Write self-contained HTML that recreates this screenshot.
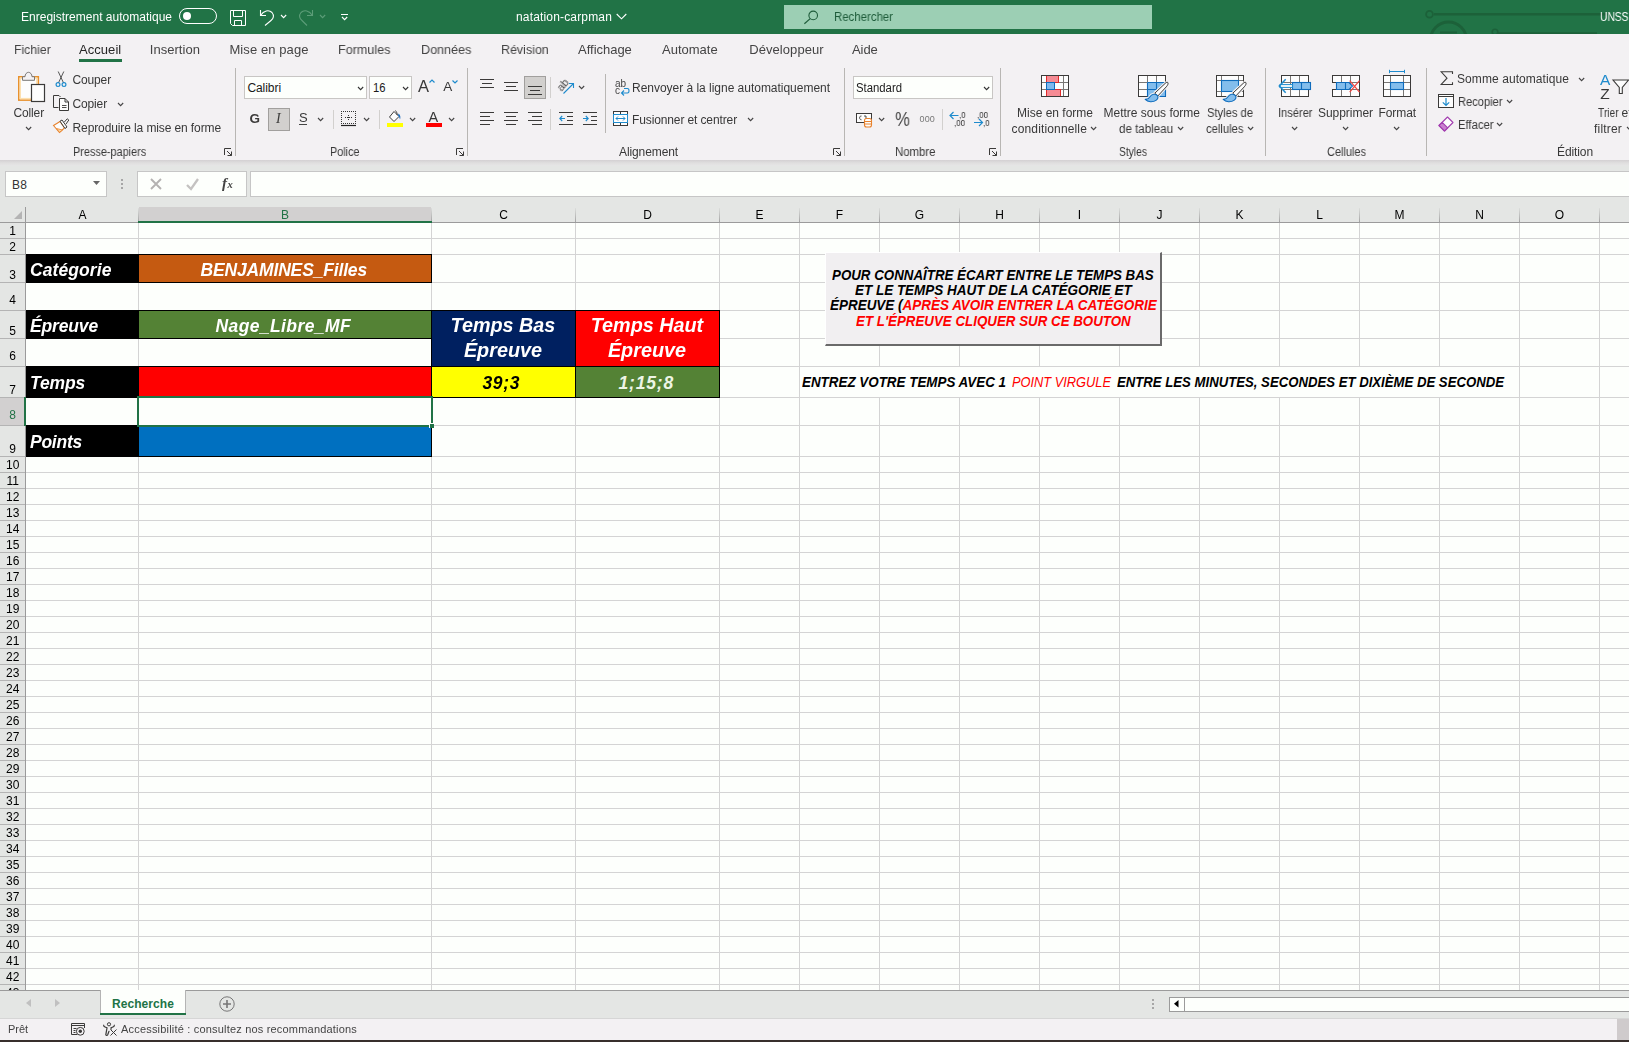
<!DOCTYPE html>
<html lang="fr"><head><meta charset="utf-8"><title>natation-carpman - Excel</title>
<style>
html,body{margin:0;padding:0;}
body{width:1629px;height:1042px;overflow:hidden;position:relative;background:#fdfffc;font-family:"Liberation Sans",sans-serif;}
div,span.t,svg.i{position:absolute;}
span.t{white-space:nowrap;display:block;}
svg.i{overflow:visible;}
</style></head>
<body>
<div style="left:0px;top:0px;width:1629px;height:34px;background:#217346;"></div>
<span class="t" style="left:21px;padding-left:0.00px;top:7.00px;font-size:12px;line-height:20px;color:#fff;letter-spacing:0.010px;will-change:transform;">Enregistrement automatique</span>
<div style="left:179px;top:8px;width:36px;height:14px;border:1px solid #fff;border-radius:8px;"></div>
<div style="left:183px;top:12px;width:8px;height:8px;background:#fff;border-radius:4px;"></div>
<svg class="i" style="left:230px;top:10px;" width="16" height="16" viewBox="0 0 16 16"><path d="M0.5 0.5H15.5V15.5H2.5L0.5 13.5z M3.5 0.5V6.5H12.5V0.5 M4.5 15.5V10.5H11.5V15.5" fill="none" stroke="#fff" stroke-width="1"/></svg>
<svg class="i" style="left:259px;top:9px;" width="16" height="18" viewBox="0 0 16 18"><path d="M1.5 1V6.5H7 M1.8 6.3C4.500 1.500 10 0.500 13 3.500C15.500 6.500 14.500 9.500 12 11.500L6 16.500" fill="none" stroke="#fff" stroke-width="1.1"/></svg>
<svg class="i" style="left:280px;top:14.15px;" width="7.2" height="4.7" viewBox="0 0 7.2 4.7"><path d="M1 1 L3.6 3.7 L6.2 1" fill="none" stroke="#fff" stroke-width="1.1"/></svg>
<svg class="i" style="left:298px;top:9px;" width="16" height="18" viewBox="0 0 16 18"><path d="M14.5 1V6.5H9 M14.2 6.300C11.500 1.500 6 0.500 3 3.500C0.500 6.500 1.500 9.500 4 11.500L9 16.500" fill="none" stroke="#5c9d78" stroke-width="1.1"/></svg>
<svg class="i" style="left:319.1px;top:14.15px;" width="7.2" height="4.7" viewBox="0 0 7.2 4.7"><path d="M1 1 L3.6 3.7 L6.2 1" fill="none" stroke="#5c9d78" stroke-width="1.1"/></svg>
<div style="left:341px;top:14px;width:7px;height:1px;background:#fff;"></div>
<svg class="i" style="left:340.9px;top:15.95px;" width="7.2" height="4.7" viewBox="0 0 7.2 4.7"><path d="M1 1 L3.6 3.7 L6.2 1" fill="none" stroke="#fff" stroke-width="1.1"/></svg>
<svg class="i" style="left:616px;top:13px;" width="12" height="8" viewBox="0 0 12 8"><path d="M0.7 1L5.5 5.800L10.300 1" fill="none" stroke="#fff" stroke-width="1.1"/></svg>
<svg class="i" style="left:1420px;top:0px;clip-path:inset(0 0 0 0);" width="209" height="34" viewBox="0 0 209 34"><g fill="none" stroke="#1c6139" stroke-width="2.600"><path d="M14 14.300H190"/><circle cx="9.500" cy="14.300" r="3.400" stroke-width="1.800"/><circle cx="28.500" cy="40" r="18" stroke-width="3"/><path d="M20 32.500H37" stroke-width="2"/><circle cx="75" cy="32" r="2.800" stroke-width="1.600"/><path d="M78 33.300H177" stroke-width="2.200"/></g></svg>
<span class="t" style="left:516px;padding-left:0.00px;top:7.00px;font-size:12px;line-height:20px;color:#fff;letter-spacing:0.163px;will-change:transform;">natation-carpman</span>
<div style="left:784px;top:5px;width:368px;height:24px;background:#9ccfb4;"></div>
<span class="t" style="left:834.00px;top:7.00px;font-size:12px;line-height:20px;color:#1e5c3a;transform:scaleX(0.9512);transform-origin:0 50%;will-change:transform;">Rechercher</span>
<svg class="i" style="left:803px;top:9px;" width="16" height="16" viewBox="0 0 16 16"><circle cx="10.200" cy="6.400" r="4.300" fill="none" stroke="#1e5c3a" stroke-width="1.1"/><path d="M7.200 9.600L1.400 14.700" stroke="#1e5c3a" stroke-width="1.2"/></svg>
<span class="t" style="left:1599.50px;top:7.00px;font-size:12px;line-height:20px;color:#fff;transform:scaleX(0.8548);transform-origin:0 50%;will-change:transform;">UNSS</span>
<div style="left:0px;top:34px;width:1629px;height:126px;background:#f3f1f3;"></div>
<span class="t" style="left:14.00px;top:40.00px;font-size:13px;line-height:20px;color:#444;transform:scaleX(0.9409);transform-origin:0 50%;will-change:transform;">Fichier</span>
<span class="t" style="left:79px;padding-left:0.00px;top:40.00px;font-size:13px;line-height:20px;color:#262626;letter-spacing:0.056px;will-change:transform;">Accueil</span>
<span class="t" style="left:149px;padding-left:0.80px;top:40.00px;font-size:13px;line-height:20px;color:#444;letter-spacing:0.027px;will-change:transform;">Insertion</span>
<span class="t" style="left:229px;padding-left:0.40px;top:40.00px;font-size:13px;line-height:20px;color:#444;letter-spacing:0.096px;will-change:transform;">Mise en page</span>
<span class="t" style="left:338.10px;top:40.00px;font-size:13px;line-height:20px;color:#444;transform:scaleX(0.9672);transform-origin:0 50%;will-change:transform;">Formules</span>
<span class="t" style="left:421.30px;top:40.00px;font-size:13px;line-height:20px;color:#444;transform:scaleX(0.9685);transform-origin:0 50%;will-change:transform;">Données</span>
<span class="t" style="left:501.20px;top:40.00px;font-size:13px;line-height:20px;color:#444;transform:scaleX(0.9588);transform-origin:0 50%;will-change:transform;">Révision</span>
<span class="t" style="left:578px;padding-left:0.10px;top:40.00px;font-size:13px;line-height:20px;color:#444;letter-spacing:-0.030px;will-change:transform;">Affichage</span>
<span class="t" style="left:662px;padding-left:0.00px;top:40.00px;font-size:13px;line-height:20px;color:#444;letter-spacing:0.007px;will-change:transform;">Automate</span>
<span class="t" style="left:749px;padding-left:0.20px;top:40.00px;font-size:13px;line-height:20px;color:#444;letter-spacing:0.071px;will-change:transform;">Développeur</span>
<span class="t" style="left:851px;padding-left:0.90px;top:40.00px;font-size:13px;line-height:20px;color:#444;letter-spacing:-0.030px;will-change:transform;">Aide</span>
<div style="left:79px;top:59px;width:43px;height:3px;background:#217346;"></div>
<div style="left:0;top:160px;width:1629px;height:6px;background:linear-gradient(#d3d0d2,#e0dfdf 50%,#e6e6e6);"></div>
<div style="left:0px;top:166px;width:1629px;height:41px;background:#e4e6e4;"></div>
<div style="left:5px;top:171px;width:100px;height:24px;background:#fdfffc;border:1px solid #c6c6c6;"></div>
<span class="t" style="left:12.00px;top:175.00px;font-size:12px;line-height:20px;color:#333;letter-spacing:0.161px;">B8</span>
<svg class="i" style="left:93px;top:181px;" width="8" height="5" viewBox="0 0 8 5"><path d="M0 0H7L3.5 4z" fill="#666"/></svg>
<div style="left:121px;top:179px;width:2px;height:2px;background:#a6a6a6;"></div>
<div style="left:121px;top:183px;width:2px;height:2px;background:#a6a6a6;"></div>
<div style="left:121px;top:187px;width:2px;height:2px;background:#a6a6a6;"></div>
<div style="left:137px;top:171px;width:108px;height:24px;background:#fdfffc;border:1px solid #c6c6c6;"></div>
<div style="left:250px;top:171px;width:1390px;height:24px;background:#fdfffc;border:1px solid #c6c6c6;"></div>
<svg class="i" style="left:150px;top:178px;" width="12" height="12" viewBox="0 0 12 12"><path d="M1 1L11 11M11 1L1 11" stroke="#b4b2b1" stroke-width="1.9" fill="none"/></svg>
<svg class="i" style="left:186px;top:178px;" width="13" height="12" viewBox="0 0 13 12"><path d="M1 7L5 11L12 1" stroke="#c4c2c1" stroke-width="2.3" fill="none"/></svg>
<span class="t" style="left:222.00px;top:172.00px;font-size:15px;line-height:22px;color:#444;font-weight:700;font-style:italic;font-family:&quot;Liberation Serif&quot;,serif;">f</span>
<span class="t" style="left:227.50px;top:175.00px;font-size:10.5px;line-height:20px;color:#444;font-weight:700;font-style:italic;font-family:&quot;Liberation Serif&quot;,serif;">x</span>
<svg class="i" style="left:17px;top:71px;" width="30" height="32" viewBox="0 0 30 32"><rect x="1.800" y="5.800" width="19.500" height="23.300" fill="#fdfdfd" stroke="#e8912d" stroke-width="1.600"/>
<rect x="3.300" y="7.300" width="16.500" height="20.300" fill="none" stroke="#fce0b0" stroke-width="1.400"/>
<path d="M5.500 9.300V5.700H8C8 3.200 9.700 1.300 11.500 1.300S15 3.200 15 5.700H17.500V9.300z" fill="#f3f1f3" stroke="#797775" stroke-width="1"/>
<rect x="14.500" y="13.500" width="13" height="17" fill="#fdfdfd" stroke="#3b3a39" stroke-width="1.200"/></svg>
<span class="t" style="left:13px;padding-left:0.50px;top:103.00px;font-size:12px;line-height:20px;color:#383838;letter-spacing:-0.140px;will-change:transform;">Coller</span>
<svg class="i" style="left:24.9px;top:126.15px;" width="7.2" height="4.7" viewBox="0 0 7.2 4.7"><path d="M1 1 L3.6 3.7 L6.2 1" fill="none" stroke="#444" stroke-width="1.1"/></svg>
<svg class="i" style="left:55px;top:71px;" width="12" height="17" viewBox="0 0 12 17"><path d="M3.2 0.5L8.6 12M8.8 0.5L3.4 12" fill="none" stroke="#555" stroke-width="1"/>
<circle cx="3" cy="13.6" r="1.9" fill="none" stroke="#1e8bcd" stroke-width="1.2"/><circle cx="9" cy="13.6" r="1.9" fill="none" stroke="#1e8bcd" stroke-width="1.2"/></svg>
<span class="t" style="left:72px;padding-left:0.50px;top:70.00px;font-size:12px;line-height:20px;color:#383838;letter-spacing:-0.143px;will-change:transform;">Couper</span>
<svg class="i" style="left:52px;top:94px;" width="18" height="18" viewBox="0 0 18 18"><path d="M6.5 13.5H1.5V1.5H7L8.5 3" fill="none" stroke="#3b3a39" stroke-width="1"/>
<path d="M7.5 4.5H13L16.5 8V16.5H7.5z" fill="#fdfdfd" stroke="#3b3a39" stroke-width="1"/><path d="M13 4.5V8H16.5" fill="none" stroke="#3b3a39" stroke-width="1"/>
<path d="M10 11.5H14.5M10 13.5H14.5" stroke="#3b3a39" stroke-width="0.9"/></svg>
<span class="t" style="left:72px;padding-left:0.50px;top:94.00px;font-size:12px;line-height:20px;color:#383838;letter-spacing:-0.142px;will-change:transform;">Copier</span>
<svg class="i" style="left:117px;top:101.65px;" width="7.2" height="4.7" viewBox="0 0 7.2 4.7"><path d="M1 1 L3.6 3.7 L6.2 1" fill="none" stroke="#444" stroke-width="1.1"/></svg>
<svg class="i" style="left:52px;top:118px;" width="18" height="17" viewBox="0 0 18 17"><path d="M1.5 7.5L8 3.5L12.5 10L7.5 14.5z" fill="#fdfdfd" stroke="#e8822d" stroke-width="1.1"/>
<path d="M4.5 10.5L7.5 14.3L10.5 12z" fill="#fbd9a5" stroke="#e8822d" stroke-width="0.8"/>
<path d="M8 3.2L10 2L15 9L13 10.5z" fill="#fdfdfd" stroke="#3b3a39" stroke-width="1"/>
<path d="M12 4.5L15.2 0.8L16.8 2L14 6" fill="#fdfdfd" stroke="#3b3a39" stroke-width="1"/></svg>
<span class="t" style="left:72px;padding-left:0.50px;top:118.00px;font-size:12px;line-height:20px;color:#383838;letter-spacing:-0.107px;will-change:transform;">Reproduire la mise en forme</span>
<span class="t" style="left:73.30px;top:142.00px;font-size:12px;line-height:20px;color:#383838;transform:scaleX(0.9070);transform-origin:0 50%;will-change:transform;">Presse-papiers</span>
<svg class="i" style="left:224px;top:148px;" width="9" height="9" viewBox="0 0 9 9"><path d="M0.5 7V0.5H7M3 3L7.5 7.5M7.5 3.5V7.5H3.5" fill="none" stroke="#3b3a39" stroke-width="1"/></svg>
<div style="left:235px;top:68px;width:1px;height:88px;background:#b8b6b3;"></div>
<div style="left:244px;top:76px;width:121px;height:21px;background:#fdfffc;border:1px solid #c8c6c4;"></div>
<span class="t" style="left:247.40px;top:78.00px;font-size:12px;line-height:20px;color:#1a1a1a;letter-spacing:-0.058px;">Calibri</span>
<svg class="i" style="left:357.2px;top:85.95px;" width="7.2" height="4.7" viewBox="0 0 7.2 4.7"><path d="M1 1 L3.6 3.7 L6.2 1" fill="none" stroke="#333" stroke-width="1.1"/></svg>
<div style="left:369px;top:76px;width:41px;height:21px;background:#fdfffc;border:1px solid #c8c6c4;"></div>
<span class="t" style="left:372.50px;top:78.00px;font-size:12px;line-height:20px;color:#1a1a1a;transform:scaleX(0.9365);transform-origin:0 50%;">16</span>
<svg class="i" style="left:402.2px;top:85.95px;" width="7.2" height="4.7" viewBox="0 0 7.2 4.7"><path d="M1 1 L3.6 3.7 L6.2 1" fill="none" stroke="#333" stroke-width="1.1"/></svg>
<span class="t" style="left:418px;padding-left:0.00px;top:74.00px;font-size:16.5px;line-height:24px;color:#383838;will-change:transform;">A</span>
<svg class="i" style="left:429px;top:79px;" width="6" height="4" viewBox="0 0 6 4"><path d="M0.5 3.5L3 1L5.5 3.5" fill="none" stroke="#1e8bcd" stroke-width="1.2"/></svg>
<span class="t" style="left:443px;padding-left:0.30px;top:77.00px;font-size:13.5px;line-height:20px;color:#383838;will-change:transform;">A</span>
<svg class="i" style="left:452px;top:80px;" width="6" height="4" viewBox="0 0 6 4"><path d="M0.5 0.5L3 3L5.5 0.5" fill="none" stroke="#1e8bcd" stroke-width="1.2"/></svg>
<span class="t" style="left:249px;padding-left:0.50px;top:109.00px;font-size:13.5px;line-height:20px;color:#3b3a39;font-weight:700;will-change:transform;">G</span>
<div style="left:268px;top:108px;width:20px;height:21px;background:#d2d0ce;border:1px solid #a19f9d;"></div>
<span class="t" style="left:276px;padding-left:0.00px;top:109.00px;font-size:14px;line-height:20px;color:#3b3a39;font-style:italic;font-family:&quot;Liberation Serif&quot;,serif;will-change:transform;">I</span>
<span class="t" style="left:299px;padding-left:0.00px;top:108.00px;font-size:13px;line-height:20px;color:#383838;will-change:transform;">S</span>
<div style="left:299px;top:124px;width:8px;height:1px;background:#444;"></div>
<svg class="i" style="left:316.9px;top:116.65px;" width="7.2" height="4.7" viewBox="0 0 7.2 4.7"><path d="M1 1 L3.6 3.7 L6.2 1" fill="none" stroke="#444" stroke-width="1.1"/></svg>
<div style="left:333px;top:110px;width:1px;height:19px;background:#d2d0ce;"></div>
<svg class="i" style="left:341px;top:111px;" width="16" height="16" viewBox="0 0 16 16"><path d="M0 0.5H15M0 12.5H15M0.5 0V13M14.5 0V13M7.5 4V10M4 6.500H11" fill="none" stroke="#333" stroke-width="1" stroke-dasharray="1 1"/>
<path d="M0 14.5H15" stroke="#222" stroke-width="1.2"/></svg>
<svg class="i" style="left:362.9px;top:116.65px;" width="7.2" height="4.7" viewBox="0 0 7.2 4.7"><path d="M1 1 L3.6 3.7 L6.2 1" fill="none" stroke="#444" stroke-width="1.1"/></svg>
<div style="left:379px;top:110px;width:1px;height:19px;background:#d2d0ce;"></div>
<svg class="i" style="left:386px;top:109px;" width="18" height="19" viewBox="0 0 18 19"><path d="M3.5 8L8 2.5L13 7.5L8 12.5z" fill="#fdfdfd" stroke="#3b3a39" stroke-width="1"/>
<path d="M9.5 1.5C10.5 3 11.5 4.5 11 6" fill="none" stroke="#3b3a39" stroke-width="1"/>
<path d="M12.5 4.5C14.5 6 14.8 8.5 14 10.5C13.5 8.5 13 7.5 12 6.5z" fill="#1e6fc0"/>
<rect x="1" y="14" width="16" height="4" fill="#ffff00"/></svg>
<svg class="i" style="left:408.9px;top:116.65px;" width="7.2" height="4.7" viewBox="0 0 7.2 4.7"><path d="M1 1 L3.6 3.7 L6.2 1" fill="none" stroke="#444" stroke-width="1.1"/></svg>
<span class="t" style="left:428px;padding-left:0.50px;top:107.00px;font-size:14.5px;line-height:21px;color:#383838;will-change:transform;">A</span>
<div style="left:426px;top:123px;width:16px;height:4px;background:#ff0000;"></div>
<svg class="i" style="left:447.9px;top:116.65px;" width="7.2" height="4.7" viewBox="0 0 7.2 4.7"><path d="M1 1 L3.6 3.7 L6.2 1" fill="none" stroke="#444" stroke-width="1.1"/></svg>
<span class="t" style="left:329.50px;top:142.00px;font-size:12px;line-height:20px;color:#383838;transform:scaleX(0.9026);transform-origin:0 50%;will-change:transform;">Police</span>
<svg class="i" style="left:456px;top:148px;" width="9" height="9" viewBox="0 0 9 9"><path d="M0.5 7V0.5H7M3 3L7.5 7.5M7.5 3.5V7.5H3.5" fill="none" stroke="#3b3a39" stroke-width="1"/></svg>
<div style="left:467px;top:68px;width:1px;height:88px;background:#b8b6b3;"></div>
<div style="left:480px;top:79px;width:14px;height:1px;background:#3b3a39;"></div>
<div style="left:482px;top:83px;width:10px;height:1px;background:#3b3a39;"></div>
<div style="left:480px;top:87px;width:14px;height:1px;background:#3b3a39;"></div>
<div style="left:504px;top:82px;width:14px;height:1px;background:#3b3a39;"></div>
<div style="left:506px;top:86px;width:10px;height:1px;background:#3b3a39;"></div>
<div style="left:504px;top:90px;width:14px;height:1px;background:#3b3a39;"></div>
<div style="left:524px;top:76px;width:20px;height:21px;background:#d2d0ce;border:1px solid #a19f9d;"></div>
<div style="left:528px;top:86px;width:14px;height:1px;background:#3b3a39;"></div>
<div style="left:530px;top:90px;width:10px;height:1px;background:#3b3a39;"></div>
<div style="left:528px;top:94px;width:14px;height:1px;background:#3b3a39;"></div>
<div style="left:550px;top:77px;width:1px;height:21px;background:#d2d0ce;"></div>
<span class="t" style="left:558.00px;top:74.00px;font-size:11px;line-height:20px;color:#444;transform:rotate(-50deg);transform-origin:50% 60%;will-change:transform;">ab</span>
<svg class="i" style="left:562px;top:82px;" width="13" height="13" viewBox="0 0 13 13"><path d="M1.5 11.5L11.5 1.5M7 1.500H11.500V6" fill="none" stroke="#1e8bcd" stroke-width="1.1"/></svg>
<svg class="i" style="left:577.9px;top:85.15px;" width="7.2" height="4.7" viewBox="0 0 7.2 4.7"><path d="M1 1 L3.6 3.7 L6.2 1" fill="none" stroke="#444" stroke-width="1.1"/></svg>
<div style="left:480px;top:112px;width:14px;height:1px;background:#3b3a39;"></div>
<div style="left:480px;top:116px;width:10px;height:1px;background:#3b3a39;"></div>
<div style="left:480px;top:120px;width:14px;height:1px;background:#3b3a39;"></div>
<div style="left:480px;top:124px;width:10px;height:1px;background:#3b3a39;"></div>
<div style="left:504px;top:112px;width:14px;height:1px;background:#3b3a39;"></div>
<div style="left:506px;top:116px;width:10px;height:1px;background:#3b3a39;"></div>
<div style="left:504px;top:120px;width:14px;height:1px;background:#3b3a39;"></div>
<div style="left:506px;top:124px;width:10px;height:1px;background:#3b3a39;"></div>
<div style="left:528px;top:112px;width:14px;height:1px;background:#3b3a39;"></div>
<div style="left:532px;top:116px;width:10px;height:1px;background:#3b3a39;"></div>
<div style="left:528px;top:120px;width:14px;height:1px;background:#3b3a39;"></div>
<div style="left:532px;top:124px;width:10px;height:1px;background:#3b3a39;"></div>
<div style="left:550px;top:109px;width:1px;height:21px;background:#d2d0ce;"></div>
<div style="left:559px;top:112px;width:14px;height:1px;background:#3b3a39;"></div>
<div style="left:567px;top:116px;width:6px;height:1px;background:#3b3a39;"></div>
<div style="left:567px;top:120px;width:6px;height:1px;background:#3b3a39;"></div>
<div style="left:559px;top:124px;width:14px;height:1px;background:#3b3a39;"></div>
<svg class="i" style="left:559px;top:115px;" width="7" height="7" viewBox="0 0 7 7"><path d="M6 3.500H0.800M3.200 1L0.800 3.500L3.200 6" fill="none" stroke="#1e8bcd" stroke-width="1.1"/></svg>
<div style="left:583px;top:112px;width:14px;height:1px;background:#3b3a39;"></div>
<div style="left:591px;top:116px;width:6px;height:1px;background:#3b3a39;"></div>
<div style="left:591px;top:120px;width:6px;height:1px;background:#3b3a39;"></div>
<div style="left:583px;top:124px;width:14px;height:1px;background:#3b3a39;"></div>
<svg class="i" style="left:583px;top:115px;" width="7" height="7" viewBox="0 0 7 7"><path d="M0 3.500H5.200M2.800 1L5.200 3.500L2.800 6" fill="none" stroke="#1e8bcd" stroke-width="1.1"/></svg>
<div style="left:605px;top:74px;width:1px;height:59px;background:#b8b6b3;"></div>
<span class="t" style="left:615px;padding-left:0.00px;top:74.00px;font-size:10px;line-height:20px;color:#444;will-change:transform;">ab</span>
<span class="t" style="left:615px;padding-left:0.00px;top:81.00px;font-size:10px;line-height:20px;color:#444;will-change:transform;">c</span>
<svg class="i" style="left:620px;top:87px;" width="10" height="9" viewBox="0 0 10 9"><path d="M4 1.5H7.5C9.5 1.5 9.5 6 7.5 6H1.5M4 3.5L1.5 6L4 8.5" fill="none" stroke="#1e8bcd" stroke-width="1.1"/></svg>
<span class="t" style="left:632px;padding-left:0.00px;top:78.00px;font-size:12px;line-height:20px;color:#383838;letter-spacing:-0.022px;will-change:transform;">Renvoyer à la ligne automatiquement</span>
<svg class="i" style="left:613px;top:111px;" width="16" height="16" viewBox="0 0 16 16"><rect x="0.5" y="0.5" width="14" height="14" fill="#fdfdfd" stroke="#3b3a39" stroke-width="1"/>
<path d="M7.5 0.5V3.5M7.5 11.5V14.5" stroke="#3b3a39" stroke-width="1"/>
<rect x="0.5" y="3.5" width="14" height="8" fill="#fdfdfd" stroke="#1e8bcd" stroke-width="1"/>
<path d="M3 7.5H12M5 5.5L3 7.5L5 9.5M10 5.5L12 7.5L10 9.5" fill="none" stroke="#1e8bcd" stroke-width="1"/></svg>
<span class="t" style="left:632px;padding-left:0.00px;top:110.00px;font-size:12px;line-height:20px;color:#383838;letter-spacing:-0.119px;will-change:transform;">Fusionner et centrer</span>
<svg class="i" style="left:746.9px;top:116.65px;" width="7.2" height="4.7" viewBox="0 0 7.2 4.7"><path d="M1 1 L3.6 3.7 L6.2 1" fill="none" stroke="#444" stroke-width="1.1"/></svg>
<span class="t" style="left:619px;padding-left:0.00px;top:142.00px;font-size:12px;line-height:20px;color:#383838;letter-spacing:-0.104px;will-change:transform;">Alignement</span>
<svg class="i" style="left:833px;top:148px;" width="9" height="9" viewBox="0 0 9 9"><path d="M0.5 7V0.5H7M3 3L7.5 7.5M7.5 3.5V7.5H3.5" fill="none" stroke="#3b3a39" stroke-width="1"/></svg>
<div style="left:844px;top:68px;width:1px;height:88px;background:#b8b6b3;"></div>
<div style="left:853px;top:76px;width:138px;height:21px;background:#fdfffc;border:1px solid #c8c6c4;"></div>
<span class="t" style="left:856.00px;top:78.00px;font-size:12px;line-height:20px;color:#1a1a1a;transform:scaleX(0.9445);transform-origin:0 50%;">Standard</span>
<svg class="i" style="left:982.7px;top:85.95px;" width="7.2" height="4.7" viewBox="0 0 7.2 4.7"><path d="M1 1 L3.6 3.7 L6.2 1" fill="none" stroke="#333" stroke-width="1.1"/></svg>
<svg class="i" style="left:856px;top:113px;" width="17" height="15" viewBox="0 0 17 15"><rect x="0.5" y="0.5" width="15" height="9" fill="#fdfdfd" stroke="#3b3a39" stroke-width="1"/>
<path d="M5.5 3C3 2.5 3 7 5.5 6.8M8 3H10V6.5" fill="none" stroke="#3b3a39" stroke-width="0.9"/>
<rect x="8.5" y="5.5" width="7" height="8.5" rx="2" fill="#fdfdfd" stroke="#e8822d" stroke-width="1.1"/><path d="M8.5 8.5H15.5M8.5 11H15.5" stroke="#e8822d" stroke-width="1"/></svg>
<svg class="i" style="left:877.9px;top:116.65px;" width="7.2" height="4.7" viewBox="0 0 7.2 4.7"><path d="M1 1 L3.6 3.7 L6.2 1" fill="none" stroke="#444" stroke-width="1.1"/></svg>
<span class="t" style="left:895.30px;top:104.00px;font-size:20px;line-height:30px;color:#4a4a4a;transform:scaleX(0.84);transform-origin:0 50%;will-change:transform;">%</span>
<span class="t" style="left:919px;padding-left:0.50px;top:109.00px;font-size:9px;line-height:20px;color:#777;letter-spacing:0.161px;will-change:transform;">000</span>
<div style="left:942px;top:109px;width:1px;height:21px;background:#d2d0ce;"></div>
<svg class="i" style="left:949px;top:111px;" width="11" height="9" viewBox="0 0 11 9"><path d="M1 4.500H9.500M4.500 1L1 4.500L4.500 8" fill="none" stroke="#1e8bcd" stroke-width="1.2"/></svg>
<span class="t" style="left:958.70px;top:105.00px;font-size:9px;line-height:20px;color:#333;transform:scaleX(0.88);transform-origin:0 50%;will-change:transform;">,0</span>
<span class="t" style="left:953.50px;top:113.00px;font-size:9px;line-height:20px;color:#333;transform:scaleX(0.88);transform-origin:0 50%;will-change:transform;">,00</span>
<svg class="i" style="left:973px;top:118px;" width="11" height="9" viewBox="0 0 11 9"><path d="M1 4.500H9.500M6 1L9.500 4.500L6 8" fill="none" stroke="#1e8bcd" stroke-width="1.2"/></svg>
<span class="t" style="left:977.30px;top:105.00px;font-size:9px;line-height:20px;color:#333;transform:scaleX(0.88);transform-origin:0 50%;will-change:transform;">,00</span>
<span class="t" style="left:982.50px;top:113.00px;font-size:9px;line-height:20px;color:#333;transform:scaleX(0.88);transform-origin:0 50%;will-change:transform;">,0</span>
<span class="t" style="left:894.50px;top:142.00px;font-size:12px;line-height:20px;color:#383838;transform:scaleX(0.9489);transform-origin:0 50%;will-change:transform;">Nombre</span>
<svg class="i" style="left:989px;top:148px;" width="9" height="9" viewBox="0 0 9 9"><path d="M0.5 7V0.5H7M3 3L7.5 7.5M7.5 3.5V7.5H3.5" fill="none" stroke="#3b3a39" stroke-width="1"/></svg>
<div style="left:1000px;top:68px;width:1px;height:88px;background:#b8b6b3;"></div>
<svg class="i" style="left:1041px;top:74px;" width="29" height="24" viewBox="0 0 29 24"><rect x="0.5" y="1.5" width="27" height="21" fill="#fdfdfd"/>
<path d="M22.5 1.5V22.5M0.5 8.5H28M0.5 15.5H28" stroke="#797775" stroke-width="1"/>
<rect x="5.5" y="1.5" width="12" height="7" fill="#f58b94" stroke="#e02b2b" stroke-width="1"/>
<rect x="5.5" y="15.5" width="14" height="7" fill="#f58b94" stroke="#e02b2b" stroke-width="1"/>
<rect x="5.5" y="8.5" width="8" height="7" fill="#7fb8ee" stroke="#0f6cbd" stroke-width="1"/>
<rect x="0.5" y="1.5" width="27" height="21" fill="none" stroke="#3b3a39" stroke-width="1"/></svg>
<span class="t" style="left:1017px;padding-left:0.00px;top:103.00px;font-size:12px;line-height:20px;color:#383838;letter-spacing:-0.002px;will-change:transform;">Mise en forme</span>
<span class="t" style="left:1011px;padding-left:0.50px;top:119.00px;font-size:12px;line-height:20px;color:#383838;letter-spacing:0.151px;will-change:transform;">conditionnelle</span>
<svg class="i" style="left:1089.9px;top:125.65px;" width="7.2" height="4.7" viewBox="0 0 7.2 4.7"><path d="M1 1 L3.6 3.7 L6.2 1" fill="none" stroke="#444" stroke-width="1.1"/></svg>
<svg class="i" style="left:1138px;top:74px;" width="32" height="30" viewBox="0 0 32 30"><rect x="0.5" y="1.5" width="27" height="21" fill="#fdfdfd"/>
<rect x="9.5" y="8.5" width="18" height="14" fill="#83bdec"/>
<path d="M9.5 1.5V8.5M18.5 1.5V8.5M0.5 8.5H9.5M0.5 15.5H9.5" stroke="#797775" stroke-width="1"/>
<rect x="0.5" y="1.5" width="27" height="21" fill="none" stroke="#3b3a39" stroke-width="1"/>
<path d="M9.5 8.5H27.5M9.5 8.5V22.5M18.5 8.5V22.5M9.5 15.5H27.5M27.5 8.5V22.5M9.5 22.5H27.5" stroke="#0f6cbd" stroke-width="1.1" fill="none"/>
<g stroke-linejoin="round"><path d="M29.600 8.300C30.700 9.200 29.800 11.200 28.300 12.800L19.800 22L16.800 19.200L26 10.500C27.500 9 28.800 7.800 29.600 8.300z M15.500 20.300C17.500 19.800 19.600 21 20 23C20.200 25.500 17 28 12.500 27.800C10 27.700 8.500 26.800 7.200 25.400C9.500 25.600 11 24.500 12 22.800C12.800 21.500 14 20.600 15.500 20.300z" fill="#f3f1f3" stroke="#f3f1f3" stroke-width="3"/>
<path d="M29.600 8.300C30.700 9.200 29.800 11.200 28.300 12.800L19.800 22L16.800 19.200L26 10.500C27.500 9 28.800 7.800 29.600 8.300z" fill="#fdfdfd" stroke="#3b3a39" stroke-width="1"/>
<path d="M15.500 20.300C17.500 19.800 19.600 21 20 23C20.200 25.500 17 28 12.500 27.800C10 27.700 8.500 26.800 7.200 25.400C9.500 25.600 11 24.500 12 22.800C12.800 21.500 14 20.600 15.500 20.300z" fill="#83bdec" stroke="#0f6cbd" stroke-width="1.1"/></g></svg>
<span class="t" style="left:1103px;padding-left:0.50px;top:103.00px;font-size:12px;line-height:20px;color:#383838;letter-spacing:-0.012px;will-change:transform;">Mettre sous forme</span>
<span class="t" style="left:1119.00px;top:119.00px;font-size:12px;line-height:20px;color:#383838;transform:scaleX(0.9634);transform-origin:0 50%;will-change:transform;">de tableau</span>
<svg class="i" style="left:1177.4px;top:125.65px;" width="7.2" height="4.7" viewBox="0 0 7.2 4.7"><path d="M1 1 L3.6 3.7 L6.2 1" fill="none" stroke="#444" stroke-width="1.1"/></svg>
<svg class="i" style="left:1216px;top:74px;" width="32" height="30" viewBox="0 0 32 30"><rect x="0.5" y="1.5" width="27" height="21" fill="#fdfdfd"/>
<path d="M5.5 1.5V22.5M22.5 1.5V22.5M0.5 6.5H28M0.5 17.5H28" stroke="#797775" stroke-width="1"/>
<rect x="0.5" y="1.5" width="27" height="21" fill="none" stroke="#3b3a39" stroke-width="1"/>
<rect x="5.5" y="6.5" width="17" height="11" fill="#83bdec" stroke="#0f6cbd" stroke-width="1.1"/>
<g stroke-linejoin="round"><path d="M29.600 8.300C30.700 9.200 29.800 11.200 28.300 12.800L19.800 22L16.800 19.200L26 10.500C27.500 9 28.800 7.800 29.600 8.300z M15.500 20.300C17.500 19.800 19.600 21 20 23C20.200 25.500 17 28 12.500 27.800C10 27.700 8.500 26.800 7.200 25.400C9.500 25.600 11 24.500 12 22.800C12.800 21.500 14 20.600 15.500 20.300z" fill="#f3f1f3" stroke="#f3f1f3" stroke-width="3"/>
<path d="M29.600 8.300C30.700 9.200 29.800 11.200 28.300 12.800L19.800 22L16.800 19.200L26 10.500C27.500 9 28.800 7.800 29.600 8.300z" fill="#fdfdfd" stroke="#3b3a39" stroke-width="1"/>
<path d="M15.500 20.300C17.500 19.800 19.600 21 20 23C20.200 25.500 17 28 12.500 27.800C10 27.700 8.500 26.800 7.200 25.400C9.500 25.600 11 24.500 12 22.800C12.800 21.500 14 20.600 15.500 20.300z" fill="#83bdec" stroke="#0f6cbd" stroke-width="1.1"/></g></svg>
<span class="t" style="left:1207.00px;top:103.00px;font-size:12px;line-height:20px;color:#383838;transform:scaleX(0.9319);transform-origin:0 50%;will-change:transform;">Styles de</span>
<span class="t" style="left:1205.50px;top:119.00px;font-size:12px;line-height:20px;color:#383838;transform:scaleX(0.9370);transform-origin:0 50%;will-change:transform;">cellules</span>
<svg class="i" style="left:1246.9px;top:125.65px;" width="7.2" height="4.7" viewBox="0 0 7.2 4.7"><path d="M1 1 L3.6 3.7 L6.2 1" fill="none" stroke="#444" stroke-width="1.1"/></svg>
<span class="t" style="left:1119.00px;top:142.00px;font-size:12px;line-height:20px;color:#383838;transform:scaleX(0.8568);transform-origin:0 50%;will-change:transform;">Styles</span>
<div style="left:1265px;top:68px;width:1px;height:88px;background:#b8b6b3;"></div>
<svg class="i" style="left:1278px;top:74px;" width="34" height="24" viewBox="0 0 34 24"><rect x="3.5" y="1.5" width="27" height="21" fill="#fdfdfd"/>
<path d="M12.5 1.5V22.5M21.5 1.5V22.5M3.5 8.5H30.5M3.5 15.5H30.5" stroke="#797775" stroke-width="1"/>
<rect x="3.5" y="1.5" width="27" height="21" fill="none" stroke="#3b3a39" stroke-width="1"/>
<rect x="14.5" y="8.5" width="18" height="7" fill="#83bdec" stroke="#0f6cbd" stroke-width="1.1"/>
<path d="M23.5 8.5V15.5" stroke="#0f6cbd" stroke-width="1.1"/>
<rect x="2" y="10.600" width="12.500" height="2.800" fill="#fdfdfd" stroke="#1e8bcd" stroke-width="1"/>
<path d="M7.700 5.300L1.300 12L7.700 18.700" fill="none" stroke="#1e8bcd" stroke-width="1.5"/></svg>
<span class="t" style="left:1277.50px;top:103.00px;font-size:12px;line-height:20px;color:#383838;transform:scaleX(0.9237);transform-origin:0 50%;will-change:transform;">Insérer</span>
<svg class="i" style="left:1290.9px;top:125.65px;" width="7.2" height="4.7" viewBox="0 0 7.2 4.7"><path d="M1 1 L3.6 3.7 L6.2 1" fill="none" stroke="#444" stroke-width="1.1"/></svg>
<svg class="i" style="left:1330px;top:74px;" width="34" height="24" viewBox="0 0 34 24"><rect x="2.5" y="1.5" width="27" height="21" fill="#fdfdfd"/>
<path d="M11.5 1.5V22.5M20.5 1.5V22.5M2.5 8.5H29.5M2.5 15.5H29.5" stroke="#797775" stroke-width="1"/>
<rect x="2.5" y="1.5" width="27" height="21" fill="none" stroke="#3b3a39" stroke-width="1"/>
<rect x="1.500" y="9" width="5" height="6" fill="#f3f1f3"/>
<path d="M2.500 8.500H6.500M2.500 15.500H6.500" stroke="#3b3a39" stroke-width="1"/>
<path d="M6.500 8.500H19L22.500 12L19 15.500H6.500z" fill="#83bdec" stroke="#0f6cbd" stroke-width="1.1"/>
<path d="M15.500 8.500V15.500" stroke="#0f6cbd" stroke-width="1.1"/>
<path d="M19.700 6.700L29.500 18.200M29.500 6.700L19.700 18.200" stroke="#f1423e" stroke-width="1.200"/></svg>
<span class="t" style="left:1318px;padding-left:0.00px;top:103.00px;font-size:12px;line-height:20px;color:#383838;letter-spacing:-0.039px;will-change:transform;">Supprimer</span>
<svg class="i" style="left:1341.9px;top:125.65px;" width="7.2" height="4.7" viewBox="0 0 7.2 4.7"><path d="M1 1 L3.6 3.7 L6.2 1" fill="none" stroke="#444" stroke-width="1.1"/></svg>
<svg class="i" style="left:1382px;top:70px;" width="30" height="28" viewBox="0 0 30 28"><path d="M7.5 1.5H22.5M7.5 -0.200V3.200M22.500 -0.200V3.200" stroke="#1e8bcd" stroke-width="1"/>
<rect x="1.5" y="5.5" width="27" height="21" fill="#fdfdfd"/>
<path d="M8.5 5.5V26.5M21.5 5.5V26.5M1.5 12.5H28.5M1.5 19.5H28.5" stroke="#797775" stroke-width="1"/>
<rect x="1.5" y="5.5" width="27" height="21" fill="none" stroke="#3b3a39" stroke-width="1"/>
<rect x="8.5" y="12.5" width="13" height="7" fill="#83bdec" stroke="#0f6cbd" stroke-width="1.1"/></svg>
<span class="t" style="left:1378px;padding-left:0.50px;top:103.00px;font-size:12px;line-height:20px;color:#383838;letter-spacing:-0.084px;will-change:transform;">Format</span>
<svg class="i" style="left:1392.9px;top:125.65px;" width="7.2" height="4.7" viewBox="0 0 7.2 4.7"><path d="M1 1 L3.6 3.7 L6.2 1" fill="none" stroke="#444" stroke-width="1.1"/></svg>
<span class="t" style="left:1326.50px;top:142.00px;font-size:12px;line-height:20px;color:#383838;transform:scaleX(0.9137);transform-origin:0 50%;will-change:transform;">Cellules</span>
<div style="left:1426px;top:68px;width:1px;height:88px;background:#b8b6b3;"></div>
<svg class="i" style="left:1440px;top:71px;" width="14" height="15" viewBox="0 0 14 15"><path d="M12.5 3V0.8H1.2L7 7.2L1.2 13.5H12.5V11.2" fill="none" stroke="#3b3a39" stroke-width="1.1"/></svg>
<span class="t" style="left:1457px;padding-left:0.00px;top:69.00px;font-size:12px;line-height:20px;color:#383838;letter-spacing:0.075px;will-change:transform;">Somme automatique</span>
<svg class="i" style="left:1578.4px;top:76.65px;" width="7.2" height="4.7" viewBox="0 0 7.2 4.7"><path d="M1 1 L3.6 3.7 L6.2 1" fill="none" stroke="#444" stroke-width="1.1"/></svg>
<svg class="i" style="left:1438px;top:94px;" width="17" height="15" viewBox="0 0 17 15"><rect x="0.5" y="0.5" width="15" height="13" fill="#fdfdfd" stroke="#3b3a39" stroke-width="1"/><path d="M0.5 2.5H15.5" stroke="#3b3a39" stroke-width="1"/>
<path d="M8 4V11.500M4.800 8.300L8 11.500L11.200 8.300" fill="none" stroke="#1e8bcd" stroke-width="1.2"/></svg>
<span class="t" style="left:1457.50px;top:92.00px;font-size:12px;line-height:20px;color:#383838;transform:scaleX(0.9266);transform-origin:0 50%;will-change:transform;">Recopier</span>
<svg class="i" style="left:1505.9px;top:98.65px;" width="7.2" height="4.7" viewBox="0 0 7.2 4.7"><path d="M1 1 L3.6 3.7 L6.2 1" fill="none" stroke="#444" stroke-width="1.1"/></svg>
<svg class="i" style="left:1438px;top:116px;" width="17" height="17" viewBox="0 0 17 17"><path d="M1 9.5L9.5 1L15 6.500L6.500 15z" fill="#fdfdfd" stroke="#a33fb0" stroke-width="1.1" stroke-linejoin="round"/>
<path d="M1 9.5L4.200 6.300L9.700 11.800L6.500 15z" fill="#c981cf" stroke="#a33fb0" stroke-width="1.1" stroke-linejoin="round"/></svg>
<span class="t" style="left:1457.50px;top:115.00px;font-size:12px;line-height:20px;color:#383838;transform:scaleX(0.9392);transform-origin:0 50%;will-change:transform;">Effacer</span>
<svg class="i" style="left:1495.9px;top:121.65px;" width="7.2" height="4.7" viewBox="0 0 7.2 4.7"><path d="M1 1 L3.6 3.7 L6.2 1" fill="none" stroke="#444" stroke-width="1.1"/></svg>
<span class="t" style="left:1600px;padding-left:0.00px;top:68.00px;font-size:15.5px;line-height:23px;color:#1e8bcd;will-change:transform;">A</span>
<span class="t" style="left:1600px;padding-left:0.30px;top:82.00px;font-size:15.5px;line-height:23px;color:#383838;will-change:transform;">Z</span>
<svg class="i" style="left:1611.5px;top:79px;" width="20" height="16" viewBox="0 0 20 16"><path d="M1 1H16.500L10.300 8.500V14.500H7.300V8.500z" fill="#fdfdfd" stroke="#3b3a39" stroke-width="1.1"/></svg>
<span class="t" style="left:1597.60px;top:103.00px;font-size:12px;line-height:20px;color:#383838;transform:scaleX(0.8506);transform-origin:0 50%;will-change:transform;">Trier</span>
<span class="t" style="left:1621px;padding-left:0.60px;top:103.00px;font-size:12px;line-height:20px;color:#383838;will-change:transform;">et</span>
<span class="t" style="left:1594px;padding-left:0.00px;top:119.00px;font-size:12px;line-height:20px;color:#383838;letter-spacing:0.191px;will-change:transform;">filtrer</span>
<svg class="i" style="left:1626.4px;top:125.65px;" width="7.2" height="4.7" viewBox="0 0 7.2 4.7"><path d="M1 1 L3.6 3.7 L6.2 1" fill="none" stroke="#444" stroke-width="1.1"/></svg>
<span class="t" style="left:1557px;padding-left:0.00px;top:142.00px;font-size:12px;line-height:20px;color:#383838;letter-spacing:-0.099px;will-change:transform;">Édition</span>
<div style="left:0px;top:207px;width:1629px;height:15px;background:#e4e6e4;"></div>
<div style="left:0px;top:222px;width:25px;height:770px;background:#e4e6e4;"></div>
<div style="left:139px;top:207px;width:292px;height:15px;background:#d2d0d0;"></div>
<div style="left:138px;top:221px;width:294px;height:2px;background:#217346;"></div>
<div style="left:138px;top:223px;width:1px;height:768px;background:#d4d4d4;"></div>
<div style="left:138px;top:208px;width:1px;height:14px;background:linear-gradient(#dcdedc,#a4a4a4);"></div>
<div style="left:431px;top:223px;width:1px;height:768px;background:#d4d4d4;"></div>
<div style="left:431px;top:208px;width:1px;height:14px;background:linear-gradient(#dcdedc,#a4a4a4);"></div>
<div style="left:575px;top:223px;width:1px;height:768px;background:#d4d4d4;"></div>
<div style="left:575px;top:208px;width:1px;height:14px;background:linear-gradient(#dcdedc,#a4a4a4);"></div>
<div style="left:719px;top:223px;width:1px;height:768px;background:#d4d4d4;"></div>
<div style="left:719px;top:208px;width:1px;height:14px;background:linear-gradient(#dcdedc,#a4a4a4);"></div>
<div style="left:799px;top:223px;width:1px;height:768px;background:#d4d4d4;"></div>
<div style="left:799px;top:208px;width:1px;height:14px;background:linear-gradient(#dcdedc,#a4a4a4);"></div>
<div style="left:879px;top:223px;width:1px;height:768px;background:#d4d4d4;"></div>
<div style="left:879px;top:208px;width:1px;height:14px;background:linear-gradient(#dcdedc,#a4a4a4);"></div>
<div style="left:959px;top:223px;width:1px;height:768px;background:#d4d4d4;"></div>
<div style="left:959px;top:208px;width:1px;height:14px;background:linear-gradient(#dcdedc,#a4a4a4);"></div>
<div style="left:1039px;top:223px;width:1px;height:768px;background:#d4d4d4;"></div>
<div style="left:1039px;top:208px;width:1px;height:14px;background:linear-gradient(#dcdedc,#a4a4a4);"></div>
<div style="left:1119px;top:223px;width:1px;height:768px;background:#d4d4d4;"></div>
<div style="left:1119px;top:208px;width:1px;height:14px;background:linear-gradient(#dcdedc,#a4a4a4);"></div>
<div style="left:1199px;top:223px;width:1px;height:768px;background:#d4d4d4;"></div>
<div style="left:1199px;top:208px;width:1px;height:14px;background:linear-gradient(#dcdedc,#a4a4a4);"></div>
<div style="left:1279px;top:223px;width:1px;height:768px;background:#d4d4d4;"></div>
<div style="left:1279px;top:208px;width:1px;height:14px;background:linear-gradient(#dcdedc,#a4a4a4);"></div>
<div style="left:1359px;top:223px;width:1px;height:768px;background:#d4d4d4;"></div>
<div style="left:1359px;top:208px;width:1px;height:14px;background:linear-gradient(#dcdedc,#a4a4a4);"></div>
<div style="left:1439px;top:223px;width:1px;height:768px;background:#d4d4d4;"></div>
<div style="left:1439px;top:208px;width:1px;height:14px;background:linear-gradient(#dcdedc,#a4a4a4);"></div>
<div style="left:1519px;top:223px;width:1px;height:768px;background:#d4d4d4;"></div>
<div style="left:1519px;top:208px;width:1px;height:14px;background:linear-gradient(#dcdedc,#a4a4a4);"></div>
<div style="left:1599px;top:223px;width:1px;height:768px;background:#d4d4d4;"></div>
<div style="left:1599px;top:208px;width:1px;height:14px;background:linear-gradient(#dcdedc,#a4a4a4);"></div>
<div style="left:1679px;top:223px;width:1px;height:768px;background:#d4d4d4;"></div>
<div style="left:1679px;top:208px;width:1px;height:14px;background:linear-gradient(#dcdedc,#a4a4a4);"></div>
<div style="left:26px;top:238px;width:1603px;height:1px;background:#d4d4d4;"></div>
<div style="left:0px;top:238px;width:25px;height:1px;background:#b4b4b4;"></div>
<div style="left:26px;top:254px;width:1603px;height:1px;background:#d4d4d4;"></div>
<div style="left:0px;top:254px;width:25px;height:1px;background:#b4b4b4;"></div>
<div style="left:26px;top:282px;width:1603px;height:1px;background:#d4d4d4;"></div>
<div style="left:0px;top:282px;width:25px;height:1px;background:#b4b4b4;"></div>
<div style="left:26px;top:310px;width:1603px;height:1px;background:#d4d4d4;"></div>
<div style="left:0px;top:310px;width:25px;height:1px;background:#b4b4b4;"></div>
<div style="left:26px;top:338px;width:1603px;height:1px;background:#d4d4d4;"></div>
<div style="left:0px;top:338px;width:25px;height:1px;background:#b4b4b4;"></div>
<div style="left:26px;top:366px;width:1603px;height:1px;background:#d4d4d4;"></div>
<div style="left:0px;top:366px;width:25px;height:1px;background:#b4b4b4;"></div>
<div style="left:26px;top:397px;width:1603px;height:1px;background:#d4d4d4;"></div>
<div style="left:0px;top:397px;width:25px;height:1px;background:#b4b4b4;"></div>
<div style="left:26px;top:425px;width:1603px;height:1px;background:#d4d4d4;"></div>
<div style="left:0px;top:425px;width:25px;height:1px;background:#b4b4b4;"></div>
<div style="left:26px;top:456px;width:1603px;height:1px;background:#d4d4d4;"></div>
<div style="left:0px;top:456px;width:25px;height:1px;background:#b4b4b4;"></div>
<div style="left:26px;top:472px;width:1603px;height:1px;background:#d4d4d4;"></div>
<div style="left:0px;top:472px;width:25px;height:1px;background:#b4b4b4;"></div>
<div style="left:26px;top:488px;width:1603px;height:1px;background:#d4d4d4;"></div>
<div style="left:0px;top:488px;width:25px;height:1px;background:#b4b4b4;"></div>
<div style="left:26px;top:504px;width:1603px;height:1px;background:#d4d4d4;"></div>
<div style="left:0px;top:504px;width:25px;height:1px;background:#b4b4b4;"></div>
<div style="left:26px;top:520px;width:1603px;height:1px;background:#d4d4d4;"></div>
<div style="left:0px;top:520px;width:25px;height:1px;background:#b4b4b4;"></div>
<div style="left:26px;top:536px;width:1603px;height:1px;background:#d4d4d4;"></div>
<div style="left:0px;top:536px;width:25px;height:1px;background:#b4b4b4;"></div>
<div style="left:26px;top:552px;width:1603px;height:1px;background:#d4d4d4;"></div>
<div style="left:0px;top:552px;width:25px;height:1px;background:#b4b4b4;"></div>
<div style="left:26px;top:568px;width:1603px;height:1px;background:#d4d4d4;"></div>
<div style="left:0px;top:568px;width:25px;height:1px;background:#b4b4b4;"></div>
<div style="left:26px;top:584px;width:1603px;height:1px;background:#d4d4d4;"></div>
<div style="left:0px;top:584px;width:25px;height:1px;background:#b4b4b4;"></div>
<div style="left:26px;top:600px;width:1603px;height:1px;background:#d4d4d4;"></div>
<div style="left:0px;top:600px;width:25px;height:1px;background:#b4b4b4;"></div>
<div style="left:26px;top:616px;width:1603px;height:1px;background:#d4d4d4;"></div>
<div style="left:0px;top:616px;width:25px;height:1px;background:#b4b4b4;"></div>
<div style="left:26px;top:632px;width:1603px;height:1px;background:#d4d4d4;"></div>
<div style="left:0px;top:632px;width:25px;height:1px;background:#b4b4b4;"></div>
<div style="left:26px;top:648px;width:1603px;height:1px;background:#d4d4d4;"></div>
<div style="left:0px;top:648px;width:25px;height:1px;background:#b4b4b4;"></div>
<div style="left:26px;top:664px;width:1603px;height:1px;background:#d4d4d4;"></div>
<div style="left:0px;top:664px;width:25px;height:1px;background:#b4b4b4;"></div>
<div style="left:26px;top:680px;width:1603px;height:1px;background:#d4d4d4;"></div>
<div style="left:0px;top:680px;width:25px;height:1px;background:#b4b4b4;"></div>
<div style="left:26px;top:696px;width:1603px;height:1px;background:#d4d4d4;"></div>
<div style="left:0px;top:696px;width:25px;height:1px;background:#b4b4b4;"></div>
<div style="left:26px;top:712px;width:1603px;height:1px;background:#d4d4d4;"></div>
<div style="left:0px;top:712px;width:25px;height:1px;background:#b4b4b4;"></div>
<div style="left:26px;top:728px;width:1603px;height:1px;background:#d4d4d4;"></div>
<div style="left:0px;top:728px;width:25px;height:1px;background:#b4b4b4;"></div>
<div style="left:26px;top:744px;width:1603px;height:1px;background:#d4d4d4;"></div>
<div style="left:0px;top:744px;width:25px;height:1px;background:#b4b4b4;"></div>
<div style="left:26px;top:760px;width:1603px;height:1px;background:#d4d4d4;"></div>
<div style="left:0px;top:760px;width:25px;height:1px;background:#b4b4b4;"></div>
<div style="left:26px;top:776px;width:1603px;height:1px;background:#d4d4d4;"></div>
<div style="left:0px;top:776px;width:25px;height:1px;background:#b4b4b4;"></div>
<div style="left:26px;top:792px;width:1603px;height:1px;background:#d4d4d4;"></div>
<div style="left:0px;top:792px;width:25px;height:1px;background:#b4b4b4;"></div>
<div style="left:26px;top:808px;width:1603px;height:1px;background:#d4d4d4;"></div>
<div style="left:0px;top:808px;width:25px;height:1px;background:#b4b4b4;"></div>
<div style="left:26px;top:824px;width:1603px;height:1px;background:#d4d4d4;"></div>
<div style="left:0px;top:824px;width:25px;height:1px;background:#b4b4b4;"></div>
<div style="left:26px;top:840px;width:1603px;height:1px;background:#d4d4d4;"></div>
<div style="left:0px;top:840px;width:25px;height:1px;background:#b4b4b4;"></div>
<div style="left:26px;top:856px;width:1603px;height:1px;background:#d4d4d4;"></div>
<div style="left:0px;top:856px;width:25px;height:1px;background:#b4b4b4;"></div>
<div style="left:26px;top:872px;width:1603px;height:1px;background:#d4d4d4;"></div>
<div style="left:0px;top:872px;width:25px;height:1px;background:#b4b4b4;"></div>
<div style="left:26px;top:888px;width:1603px;height:1px;background:#d4d4d4;"></div>
<div style="left:0px;top:888px;width:25px;height:1px;background:#b4b4b4;"></div>
<div style="left:26px;top:904px;width:1603px;height:1px;background:#d4d4d4;"></div>
<div style="left:0px;top:904px;width:25px;height:1px;background:#b4b4b4;"></div>
<div style="left:26px;top:920px;width:1603px;height:1px;background:#d4d4d4;"></div>
<div style="left:0px;top:920px;width:25px;height:1px;background:#b4b4b4;"></div>
<div style="left:26px;top:936px;width:1603px;height:1px;background:#d4d4d4;"></div>
<div style="left:0px;top:936px;width:25px;height:1px;background:#b4b4b4;"></div>
<div style="left:26px;top:952px;width:1603px;height:1px;background:#d4d4d4;"></div>
<div style="left:0px;top:952px;width:25px;height:1px;background:#b4b4b4;"></div>
<div style="left:26px;top:968px;width:1603px;height:1px;background:#d4d4d4;"></div>
<div style="left:0px;top:968px;width:25px;height:1px;background:#b4b4b4;"></div>
<div style="left:26px;top:984px;width:1603px;height:1px;background:#d4d4d4;"></div>
<div style="left:0px;top:984px;width:25px;height:1px;background:#b4b4b4;"></div>
<div style="left:0px;top:222px;width:1629px;height:1px;background:#9b9b9b;"></div>
<div style="left:138px;top:221px;width:294px;height:2px;background:#217346;"></div>
<div style="left:25px;top:207px;width:1px;height:784px;background:#9b9b9b;"></div>
<div style="left:0px;top:398px;width:25px;height:27px;background:#d2d0d0;"></div>
<div style="left:24px;top:397px;width:2px;height:29px;background:#217346;"></div>
<svg class="i" style="left:14px;top:211px;" width="9" height="9" viewBox="0 0 9 9"><path d="M8 0V8H0z" fill="#b4b4b4"/></svg>
<span class="t" style="left:78.50px;top:205.00px;font-size:12px;line-height:20px;color:#000;">A</span>
<span class="t" style="left:281.00px;top:205.00px;font-size:12px;line-height:20px;color:#217346;">B</span>
<span class="t" style="left:499.17px;top:205.00px;font-size:12px;line-height:20px;color:#000;">C</span>
<span class="t" style="left:643.17px;top:205.00px;font-size:12px;line-height:20px;color:#000;">D</span>
<span class="t" style="left:755.50px;top:205.00px;font-size:12px;line-height:20px;color:#000;">E</span>
<span class="t" style="left:835.83px;top:205.00px;font-size:12px;line-height:20px;color:#000;">F</span>
<span class="t" style="left:914.83px;top:205.00px;font-size:12px;line-height:20px;color:#000;">G</span>
<span class="t" style="left:995.17px;top:205.00px;font-size:12px;line-height:20px;color:#000;">H</span>
<span class="t" style="left:1077.83px;top:205.00px;font-size:12px;line-height:20px;color:#000;">I</span>
<span class="t" style="left:1156.50px;top:205.00px;font-size:12px;line-height:20px;color:#000;">J</span>
<span class="t" style="left:1235.50px;top:205.00px;font-size:12px;line-height:20px;color:#000;">K</span>
<span class="t" style="left:1316.16px;top:205.00px;font-size:12px;line-height:20px;color:#000;">L</span>
<span class="t" style="left:1394.50px;top:205.00px;font-size:12px;line-height:20px;color:#000;">M</span>
<span class="t" style="left:1475.17px;top:205.00px;font-size:12px;line-height:20px;color:#000;">N</span>
<span class="t" style="left:1554.83px;top:205.00px;font-size:12px;line-height:20px;color:#000;">O</span>
<span class="t" style="left:1635.50px;top:205.00px;font-size:12px;line-height:20px;color:#000;">P</span>
<span class="t" style="left:9.36px;top:221.00px;font-size:12px;line-height:20px;color:#000;">1</span>
<span class="t" style="left:9.36px;top:237.00px;font-size:12px;line-height:20px;color:#000;">2</span>
<span class="t" style="left:9.36px;top:265.00px;font-size:12px;line-height:20px;color:#000;">3</span>
<span class="t" style="left:9.36px;top:290.00px;font-size:12px;line-height:20px;color:#000;">4</span>
<span class="t" style="left:9.36px;top:321.00px;font-size:12px;line-height:20px;color:#000;">5</span>
<span class="t" style="left:9.36px;top:346.00px;font-size:12px;line-height:20px;color:#000;">6</span>
<span class="t" style="left:9.36px;top:380.00px;font-size:12px;line-height:20px;color:#000;">7</span>
<span class="t" style="left:9.36px;top:405.00px;font-size:12px;line-height:20px;color:#217346;">8</span>
<span class="t" style="left:9.36px;top:439.00px;font-size:12px;line-height:20px;color:#000;">9</span>
<span class="t" style="left:6.03px;top:455.00px;font-size:12px;line-height:20px;color:#000;">10</span>
<span class="t" style="left:6.47px;top:471.00px;font-size:12px;line-height:20px;color:#000;">11</span>
<span class="t" style="left:6.03px;top:487.00px;font-size:12px;line-height:20px;color:#000;">12</span>
<span class="t" style="left:6.03px;top:503.00px;font-size:12px;line-height:20px;color:#000;">13</span>
<span class="t" style="left:6.03px;top:519.00px;font-size:12px;line-height:20px;color:#000;">14</span>
<span class="t" style="left:6.03px;top:535.00px;font-size:12px;line-height:20px;color:#000;">15</span>
<span class="t" style="left:6.03px;top:551.00px;font-size:12px;line-height:20px;color:#000;">16</span>
<span class="t" style="left:6.03px;top:567.00px;font-size:12px;line-height:20px;color:#000;">17</span>
<span class="t" style="left:6.03px;top:583.00px;font-size:12px;line-height:20px;color:#000;">18</span>
<span class="t" style="left:6.03px;top:599.00px;font-size:12px;line-height:20px;color:#000;">19</span>
<span class="t" style="left:6.03px;top:615.00px;font-size:12px;line-height:20px;color:#000;">20</span>
<span class="t" style="left:6.03px;top:631.00px;font-size:12px;line-height:20px;color:#000;">21</span>
<span class="t" style="left:6.03px;top:647.00px;font-size:12px;line-height:20px;color:#000;">22</span>
<span class="t" style="left:6.03px;top:663.00px;font-size:12px;line-height:20px;color:#000;">23</span>
<span class="t" style="left:6.03px;top:679.00px;font-size:12px;line-height:20px;color:#000;">24</span>
<span class="t" style="left:6.03px;top:695.00px;font-size:12px;line-height:20px;color:#000;">25</span>
<span class="t" style="left:6.03px;top:711.00px;font-size:12px;line-height:20px;color:#000;">26</span>
<span class="t" style="left:6.03px;top:727.00px;font-size:12px;line-height:20px;color:#000;">27</span>
<span class="t" style="left:6.03px;top:743.00px;font-size:12px;line-height:20px;color:#000;">28</span>
<span class="t" style="left:6.03px;top:759.00px;font-size:12px;line-height:20px;color:#000;">29</span>
<span class="t" style="left:6.03px;top:775.00px;font-size:12px;line-height:20px;color:#000;">30</span>
<span class="t" style="left:6.03px;top:791.00px;font-size:12px;line-height:20px;color:#000;">31</span>
<span class="t" style="left:6.03px;top:807.00px;font-size:12px;line-height:20px;color:#000;">32</span>
<span class="t" style="left:6.03px;top:823.00px;font-size:12px;line-height:20px;color:#000;">33</span>
<span class="t" style="left:6.03px;top:839.00px;font-size:12px;line-height:20px;color:#000;">34</span>
<span class="t" style="left:6.03px;top:855.00px;font-size:12px;line-height:20px;color:#000;">35</span>
<span class="t" style="left:6.03px;top:871.00px;font-size:12px;line-height:20px;color:#000;">36</span>
<span class="t" style="left:6.03px;top:887.00px;font-size:12px;line-height:20px;color:#000;">37</span>
<span class="t" style="left:6.03px;top:903.00px;font-size:12px;line-height:20px;color:#000;">38</span>
<span class="t" style="left:6.03px;top:919.00px;font-size:12px;line-height:20px;color:#000;">39</span>
<span class="t" style="left:6.03px;top:935.00px;font-size:12px;line-height:20px;color:#000;">40</span>
<span class="t" style="left:6.03px;top:951.00px;font-size:12px;line-height:20px;color:#000;">41</span>
<span class="t" style="left:6.03px;top:967.00px;font-size:12px;line-height:20px;color:#000;">42</span>
<span class="t" style="left:6.03px;top:983.00px;font-size:12px;line-height:20px;color:#000;">43</span>
<div style="left:26px;top:254px;width:113px;height:29px;background:#000;"></div>
<div style="left:27px;top:255px;width:111px;height:27px;background:#000;"></div>
<div style="left:138px;top:254px;width:294px;height:29px;background:#000;"></div>
<div style="left:139px;top:255px;width:292px;height:27px;background:#c55a11;"></div>
<div style="left:26px;top:310px;width:113px;height:29px;background:#000;"></div>
<div style="left:27px;top:311px;width:111px;height:27px;background:#000;"></div>
<div style="left:138px;top:310px;width:294px;height:29px;background:#000;"></div>
<div style="left:139px;top:311px;width:292px;height:27px;background:#548235;"></div>
<div style="left:431px;top:310px;width:145px;height:57px;background:#000;"></div>
<div style="left:432px;top:311px;width:143px;height:55px;background:#002060;"></div>
<div style="left:575px;top:310px;width:145px;height:57px;background:#000;"></div>
<div style="left:576px;top:311px;width:143px;height:55px;background:#ff0000;"></div>
<div style="left:26px;top:366px;width:113px;height:32px;background:#000;"></div>
<div style="left:27px;top:367px;width:111px;height:30px;background:#000;"></div>
<div style="left:138px;top:366px;width:294px;height:32px;background:#000;"></div>
<div style="left:139px;top:367px;width:292px;height:30px;background:#ff0000;"></div>
<div style="left:431px;top:366px;width:145px;height:32px;background:#000;"></div>
<div style="left:432px;top:367px;width:143px;height:30px;background:#ffff00;"></div>
<div style="left:575px;top:366px;width:145px;height:32px;background:#000;"></div>
<div style="left:576px;top:367px;width:143px;height:30px;background:#548235;"></div>
<div style="left:26px;top:425px;width:113px;height:32px;background:#000;"></div>
<div style="left:27px;top:426px;width:111px;height:30px;background:#000;"></div>
<div style="left:138px;top:425px;width:294px;height:32px;background:#000;"></div>
<div style="left:139px;top:426px;width:292px;height:30px;background:#0070c0;"></div>
<div style="left:137px;top:396px;width:292px;height:27px;border:2px solid #217346;"></div>
<div style="left:429px;top:423px;width:5px;height:5px;background:#fdfffc;"></div>
<div style="left:430px;top:424px;width:4px;height:4px;background:#217346;"></div>
<span class="t" style="left:30.00px;top:257.00px;font-size:17.5px;line-height:26px;color:#fff;letter-spacing:0.087px;font-weight:700;font-style:italic;">Catégorie</span>
<span class="t" style="left:200.50px;top:257.00px;font-size:17.5px;line-height:26px;color:#fff;letter-spacing:-0.160px;font-weight:700;font-style:italic;">BENJAMINES_Filles</span>
<span class="t" style="left:30.00px;top:313.00px;font-size:17.5px;line-height:26px;color:#fff;letter-spacing:-0.151px;font-weight:700;font-style:italic;">Épreuve</span>
<span class="t" style="left:215.50px;top:313.00px;font-size:17.5px;line-height:26px;color:#fff;letter-spacing:0.399px;font-weight:700;font-style:italic;">Nage_Libre_MF</span>
<span class="t" style="left:30.00px;top:370.00px;font-size:17.5px;line-height:26px;color:#fff;letter-spacing:-0.151px;font-weight:700;font-style:italic;">Temps</span>
<span class="t" style="left:30.00px;top:429.00px;font-size:17.5px;line-height:26px;color:#fff;letter-spacing:-0.246px;font-weight:700;font-style:italic;">Points</span>
<span class="t" style="left:482.50px;top:370.00px;font-size:17.5px;line-height:26px;color:#000;letter-spacing:0.619px;font-weight:700;font-style:italic;">39;3</span>
<span class="t" style="left:618.50px;top:370.00px;font-size:17.5px;line-height:26px;color:#edf5e6;letter-spacing:0.819px;font-weight:700;font-style:italic;">1;15;8</span>
<span class="t" style="left:450.55px;top:311.00px;font-size:19.8px;line-height:29px;color:#fff;font-weight:700;font-style:italic;">Temps Bas</span>
<span class="t" style="left:463.93px;top:336.00px;font-size:19.8px;line-height:29px;color:#fff;font-weight:700;font-style:italic;">Épreuve</span>
<span class="t" style="left:590.71px;top:311.00px;font-size:19.8px;line-height:29px;color:#fff;font-weight:700;font-style:italic;">Temps Haut</span>
<span class="t" style="left:607.93px;top:336.00px;font-size:19.8px;line-height:29px;color:#fff;font-weight:700;font-style:italic;">Épreuve</span>
<div style="left:825px;top:252px;width:334px;height:91px;background:#f1eff1;border-top:1px solid #fff;border-left:1px solid #fff;border-right:2px solid #6a6a6a;border-bottom:2px solid #6a6a6a;"></div>
<span class="t" style="left:832px;top:265px;font-size:14.2px;line-height:21px;font-weight:700;font-style:italic;transform:scaleX(0.9390);transform-origin:0 50%;"><span style="color:#000">POUR CONNAÎTRE ÉCART ENTRE LE TEMPS BAS</span></span>
<span class="t" style="left:855px;top:280px;font-size:14.2px;line-height:21px;font-weight:700;font-style:italic;transform:scaleX(0.9490);transform-origin:0 50%;"><span style="color:#000">ET LE TEMPS HAUT DE LA CATÉGORIE ET</span></span>
<span class="t" style="left:830px;top:295px;font-size:14.2px;line-height:21px;font-weight:700;font-style:italic;transform:scaleX(0.9484);transform-origin:0 50%;"><span style="color:#000">ÉPREUVE (</span><span style="color:#ff0000">APRÈS AVOIR ENTRER LA CATÉGORIE</span></span>
<span class="t" style="left:856px;top:311px;font-size:14.2px;line-height:21px;font-weight:700;font-style:italic;transform:scaleX(0.9396);transform-origin:0 50%;"><span style="color:#ff0000">ET L&#x27;ÉPREUVE CLIQUER SUR CE BOUTON</span></span>
<div style="left:800px;top:367px;width:719px;height:30px;background:#fdfffc;"></div>
<span class="t" style="left:802.00px;top:372.00px;font-size:14px;line-height:20px;color:#000;transform:scaleX(0.9571);transform-origin:0 50%;font-weight:700;font-style:italic;">ENTREZ VOTRE TEMPS AVEC 1</span>
<span class="t" style="left:1012.00px;top:372.00px;font-size:14px;line-height:20px;color:#ff0000;transform:scaleX(0.9156);transform-origin:0 50%;font-style:italic;">POINT VIRGULE</span>
<span class="t" style="left:1117.00px;top:372.00px;font-size:14px;line-height:20px;color:#000;transform:scaleX(0.9404);transform-origin:0 50%;font-weight:700;font-style:italic;">ENTRE LES MINUTES, SECONDES ET DIXIÈME DE SECONDE</span>
<div style="left:0px;top:990px;width:1629px;height:28px;background:#e4e6e4;"></div>
<div style="left:0px;top:990px;width:1629px;height:1px;background:#9b9b9b;"></div>
<div style="left:100px;top:990px;width:86px;height:24px;background:#fdfffc;"></div>
<div style="left:100px;top:990px;width:1px;height:24px;background:#b4b4b4;"></div>
<div style="left:185px;top:990px;width:1px;height:24px;background:#b4b4b4;"></div>
<div style="left:100px;top:1013px;width:86px;height:2px;background:#217346;"></div>
<span class="t" style="left:112.00px;top:994.00px;font-size:12px;line-height:20px;color:#217346;letter-spacing:0.070px;font-weight:700;">Recherche</span>
<svg class="i" style="left:26px;top:999px;" width="6" height="9" viewBox="0 0 6 9"><path d="M5 0V8L0 4z" fill="#c0c0c0"/></svg>
<svg class="i" style="left:55px;top:999px;" width="6" height="9" viewBox="0 0 6 9"><path d="M0 0V8L5 4z" fill="#c0c0c0"/></svg>
<svg class="i" style="left:219px;top:996px;" width="16" height="16" viewBox="0 0 16 16"><circle cx="8" cy="8" r="7.2" fill="none" stroke="#777" stroke-width="1"/><path d="M4 8H12M8 4V12" stroke="#777" stroke-width="1.6"/></svg>
<div style="left:1152px;top:999px;width:2px;height:2px;background:#a6a6a6;"></div>
<div style="left:1152px;top:1003px;width:2px;height:2px;background:#a6a6a6;"></div>
<div style="left:1152px;top:1007px;width:2px;height:2px;background:#a6a6a6;"></div>
<div style="left:1169px;top:997px;width:470px;height:13px;background:#fdfffc;border:1px solid #9b9b9b;"></div>
<div style="left:1184px;top:998px;width:1px;height:13px;background:#9b9b9b;"></div>
<svg class="i" style="left:1174px;top:1000px;" width="5" height="8" viewBox="0 0 5 8"><path d="M4.5 0V7.5L0 3.75z" fill="#000"/></svg>
<div style="left:0px;top:1018px;width:1629px;height:22px;background:#f3f1f3;"></div>
<div style="left:0px;top:1018px;width:1629px;height:1px;background:#d6d6d6;"></div>
<div style="left:1617px;top:1019px;width:12px;height:21px;background:#cfcbcc;"></div>
<span class="t" style="left:8px;padding-left:0.00px;top:1019.00px;font-size:11px;line-height:20px;color:#444;letter-spacing:-0.043px;will-change:transform;">Prêt</span>
<svg class="i" style="left:71px;top:1023px;" width="15" height="13" viewBox="0 0 15 13"><path d="M6 11.500H0.500V0.500H13.500V5" fill="none" stroke="#3b3a39" stroke-width="1"/><path d="M0.500 2.500H13.500" stroke="#3b3a39" stroke-width="1"/>
<path d="M2.500 5.500H5.500M2.500 7.500H4.500M2.500 9.500H4.500" stroke="#3b3a39" stroke-width="1"/>
<circle cx="9.300" cy="8.300" r="3.900" fill="#f3f1f3" stroke="#3b3a39" stroke-width="1"/><circle cx="9.300" cy="8.300" r="1.700" fill="#3b3a39"/></svg>
<svg class="i" style="left:102px;top:1022px;" width="16" height="15" viewBox="0 0 16 15"><circle cx="7" cy="2.300" r="1.600" fill="none" stroke="#3b3a39" stroke-width="1"/>
<path d="M1.700 3.200C1.200 4.300 3.500 5.300 5 5.800L3.800 12.800C4.200 13.800 5.300 13.600 5.700 12.800L7 9.300M12.300 3.200C12.800 4.300 10.500 5.300 9 5.800L9.200 7.200" fill="none" stroke="#3b3a39" stroke-width="1.200" stroke-linecap="round"/>
<path d="M8.500 7.500L14.500 13.500M14.500 7.500L8.500 13.500" stroke="#3b3a39" stroke-width="1"/></svg>
<span class="t" style="left:121px;padding-left:0.00px;top:1019.00px;font-size:11px;line-height:20px;color:#444;letter-spacing:0.190px;will-change:transform;">Accessibilité : consultez nos recommandations</span>
<div style="left:0px;top:1040px;width:1629px;height:2px;background:#382f2c;"></div>
</body></html>
